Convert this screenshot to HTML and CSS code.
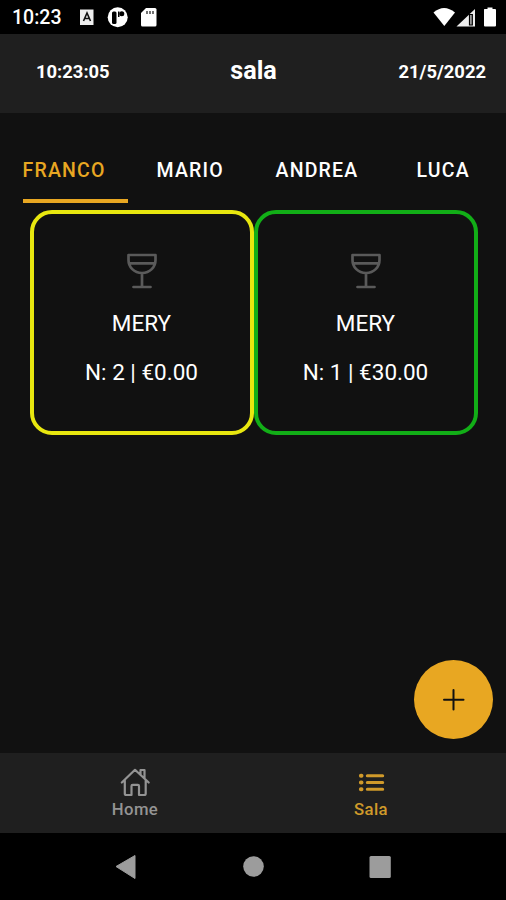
FILE: index.html
```
<!DOCTYPE html>
<html lang="it">
<head>
  <meta charset="UTF-8" />
  <meta name="viewport" content="width=device-width, initial-scale=1.0"/>
  <title>sala</title>
  <link rel="stylesheet" href="styles.css">
</head>
<body>
  <div class="status">
    <span class="ora">10:23</span>
    <svg class="notifiche" width="80" height="34" viewBox="0 0 80 34">
      <rect x="2" y="9.5" width="13.500" height="15.500" fill="#eee"/>
      <path d="M5.500 21L9 13L12.500 21M7 18.500H11" fill="none" stroke="#111" stroke-width="1.600"/>
      <circle cx="39.700" cy="17.200" r="10" fill="#fff"/>
      <rect x="34" y="11.500" width="4.500" height="12.500" rx="1.500" fill="#000"/>
      <path d="M40 11.500h1.500v5.500h-1.500z" fill="#000"/>
      <circle cx="43.800" cy="13.800" r="2.500" fill="#000"/>
      <path d="M68 8H77Q78.500 8 78.500 9.500V25Q78.500 26.500 77 26.500H64.500Q63 26.500 63 25V13Z" fill="#fff"/>
      <path d="M69 11v3M72 11v3M75 11v3" stroke="#444" stroke-width="1.500"/>
    </svg>
    <svg class="segnale" width="66" height="34" viewBox="0 0 66 34">
      <path d="M0.500 12.500Q11 3.500 22 12.500L11.300 26Z" fill="#fff"/>
      <path d="M23.500 26.500L42 9V26.500Z" fill="#eee"/>
      <path d="M36.500 14.500H39.300V25H36.500Z" fill="#aaa" stroke="#000" stroke-width="1.200"/>
      <path d="M51.500 9H54.500V7.500H59.500V9H62Q63 9 63 10V25.500Q63 26.500 62 26.500H52Q51 26.500 51 25.500V10Q51 9 51.500 9Z" fill="#fff"/>
    </svg>
  </div>

  <div class="header">
    <span>10:23:05</span>
    <h1>sala</h1>
    <span class="data">21/5/2022</span>
  </div>

  <div class="content">
    <div class="segment">
      <div class="tab attivo">FRANCO</div>
      <div class="tab">MARIO</div>
      <div class="tab">ANDREA</div>
      <div class="tab">LUCA</div>
    </div>

    <div class="tavoli">
      <div class="tavolo giallo">
        <svg class="calice" width="32" height="38" viewBox="0 0 32 38">
          <path d="M2.500 3H29.500V8C29.500 15 24 21 16 21S2.500 15 2.500 8ZM3 11.300H29M16 21V35M7.500 35H24.500" />
        </svg>
        <p class="nome">MERY</p>
        <p class="conto">N: 2 | €0.00</p>
      </div>
      <div class="tavolo verde">
        <svg class="calice" width="32" height="38" viewBox="0 0 32 38">
          <path d="M2.500 3H29.500V8C29.500 15 24 21 16 21S2.500 15 2.500 8ZM3 11.300H29M16 21V35M7.500 35H24.500" />
        </svg>
        <p class="nome">MERY</p>
        <p class="conto">N: 1 | €30.00</p>
      </div>
    </div>

    <div class="fab">
      <svg width="79" height="79" viewBox="0 0 79 79">
        <path d="M39.500 30V49.500M30 39.700H49.500" stroke="#111" stroke-width="2" stroke-linecap="round"/>
      </svg>
    </div>
  </div>

  <div class="tabbar">
    <div class="voce">
      <svg width="32" height="30" viewBox="0 0 32 30">
        <path d="M2.800 15.500L16 2.800L29.700 15.500M21.500 7.500V3H25.500V11M5.800 13V26.500Q5.800 28 7.300 28H12.500V19Q12.500 17.800 13.700 17.800H18.800Q20 17.800 20 19V28H25.200Q26.700 28 26.700 26.500V13" />
      </svg>
      <span>Home</span>
    </div>
    <div class="voce attivo">
      <svg width="32" height="30" viewBox="0 0 32 30">
        <path d="M12.300 8.700H27.700M12.300 15.400H27.700M12.300 22.300H27.700" stroke-width="3" />
        <path d="M5.900 8.700H6.500M5.900 15.400H6.500M5.900 22.300H6.500" stroke-width="4" />
      </svg>
      <span>Sala</span>
    </div>
  </div>

  <div class="navigazione">
    <svg width="506" height="67" viewBox="0 0 506 67">
      <path d="M116 33.500L135 22.500V45.500Z" stroke="#9c9c9c" stroke-linejoin="round"/>
      <circle cx="253.500" cy="33.500" r="10.300"/>
      <rect x="369.500" y="23" width="21.300" height="22" rx="1.500"/>
    </svg>
  </div>
</body>
</html>
```
FILE: styles.css
```
body, html {
  margin: 0;
  padding: 0;
  height: 100%;
  font-family: Roboto, sans-serif;
  background: #000;
  color: #fff;
}
body {
  display: flex;
  flex-direction: column;
  overflow: hidden;
}
svg { display: block; }
.status {
  display: flex;
  height: 34px;
  align-items: center;
  flex-shrink: 0;
}
.ora {
  width: 66px;
  padding-left: 12px;
  padding-top: 2px;
  font-size: 19.5px;
  font-weight: 500;
  line-height: 34px;
}
.segnale { margin-left: auto; margin-right: 7px; }
.header {
  display: grid;
  grid-template-columns: 1fr auto 1fr;
  align-items: center;
  box-sizing: border-box;
  height: 79px;
  flex-shrink: 0;
  padding: 0 20px 5px 36px;
  background: #1f1f1f;
  font-size: 18.4px;
  font-weight: bold;
}
.header h1 {
  margin: 0;
  padding-right: 15px;
  font-size: 25.2px;
  line-height: 30px;
}
.data { text-align: right; }
.content {
  position: relative;
  flex: 1;
  background: #111;
}
.segment {
  display: grid;
  grid-template-columns: 134px 119px 141px auto;
  padding: 36px 0 0 22.5px;
  height: 61px;
}
.tab {
  box-sizing: border-box;
  width: 105px;
  height: 54px;
  font-size: 19.5px;
  font-weight: 500;
  letter-spacing: 1.2px;
  line-height: 43px;
}
.tab.attivo {
  color: #e8a722;
  border-bottom: 4px solid #e8a722;
}
.tavoli {
  display: grid;
  grid-template-columns: 1fr 1fr;
  width: 448px;
  margin-left: 29.5px;
}
.tavolo {
  display: flex;
  flex-direction: column;
  align-items: center;
  box-sizing: border-box;
  height: 225px;
  border: 4px solid;
  border-radius: 22px;
  padding-top: 38px;
  font-size: 22.5px;
}
.giallo { border-color: #e8e70f; }
.verde { border-color: #12ae17; }
.calice path {
  fill: none;
  stroke: #5a5a5a;
  stroke-width: 2.7;
  stroke-linecap: round;
  stroke-linejoin: round;
}
.tavolo p {
  margin: 0;
  line-height: 28px;
}
.tavolo .nome { margin-top: 19px; }
.tavolo .conto { margin-top: 21px; }
.fab {
  position: absolute;
  right: 13px;
  bottom: 14px;
  width: 79px;
  height: 79px;
  border-radius: 50%;
  background: #e8a722;
}
.tabbar {
  display: flex;
  justify-content: center;
  gap: 136px;
  height: 80px;
  flex-shrink: 0;
  background: #1f1f1f;
}
.voce {
  display: flex;
  flex-direction: column;
  align-items: center;
  width: 100px;
  padding-top: 14px;
  color: #949494;
  font-size: 16.7px;
  font-weight: 500;
  line-height: 26px;
  letter-spacing: 0.4px;
}
.voce svg {
  fill: none;
  stroke: currentColor;
  stroke-width: 2.2;
  stroke-linecap: round;
  stroke-linejoin: round;
}
.voce.attivo { color: #d09a2a; }
.navigazione {
  height: 67px;
  flex-shrink: 0;
  fill: #9c9c9c;
}
```
